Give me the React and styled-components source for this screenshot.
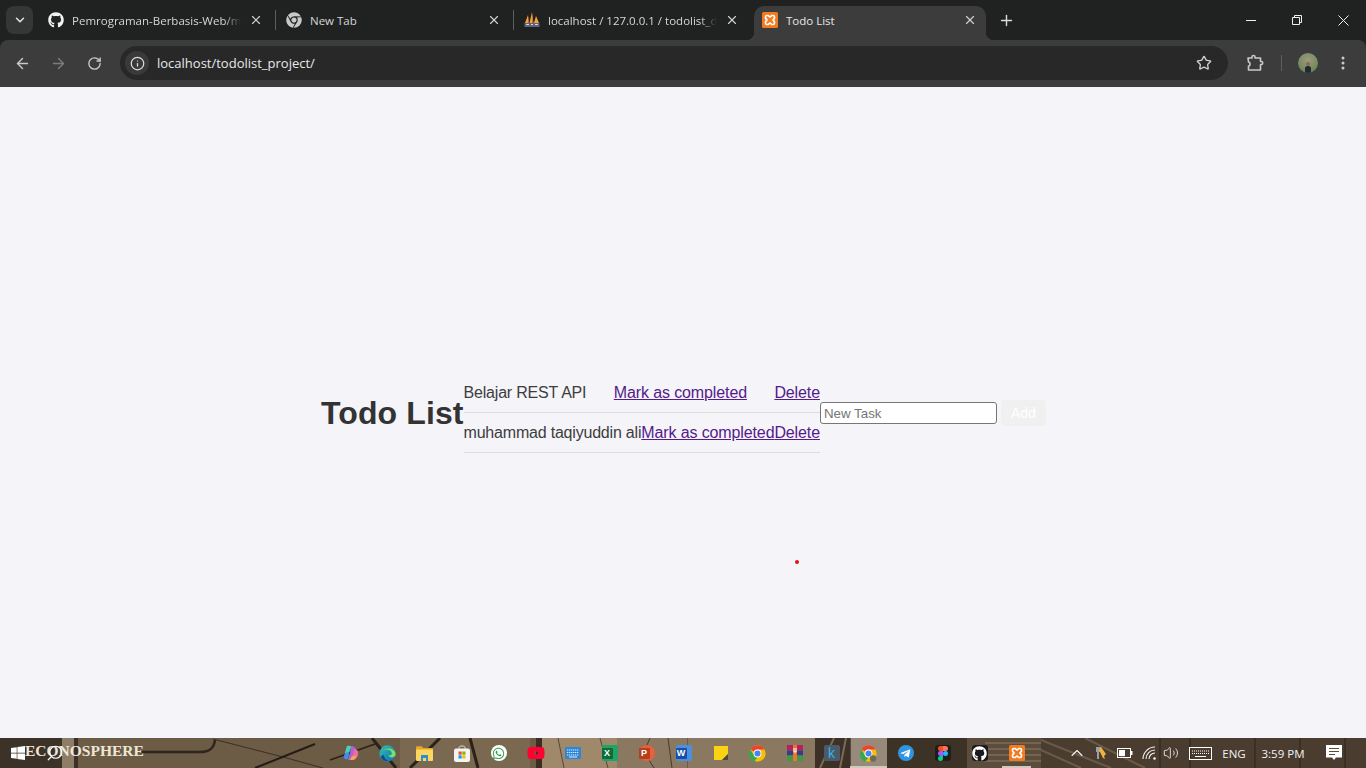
import styled, { createGlobalStyle } from 'styled-components';
import { ArrowLeft, ArrowRight, RotateCw, Info, Star, X, Plus, ChevronDown, Search, ChevronUp, Volume2 } from 'lucide-react';
import { FaGithub, FaChrome, FaWindows, FaWhatsapp, FaTelegramPlane, FaYoutube } from 'react-icons/fa';

const GlobalStyle = createGlobalStyle`
  html, body { margin: 0; padding: 0; height: 100%; overflow: hidden; }
  body { font-family: "Liberation Sans", Arial, sans-serif; background: #f4f4f9; }
`;

const Screen = styled.div`
  width: 1366px;
  height: 768px;
  display: flex;
  flex-direction: column;
  position: relative;
  overflow: hidden;
  background: #202222;
`;

/* browser chrome */
const TabStrip = styled.div`
  height: 40px;
  background: #202222;
  display: flex;
  align-items: flex-end;
  padding-left: 6px;
  font-family: "Open Sans", "Noto Sans", sans-serif;
`;

const TabSearch = styled.div`
  width: 27px;
  height: 28px;
  margin: 0 7px 6px 0;
  border-radius: 8px;
  background: #353737;
  color: #e4e4e4;
  display: flex;
  align-items: center;
  justify-content: center;
`;

const Tab = styled.div`
  width: 232px;
  height: 34px;
  margin-right: 6px;
  box-sizing: border-box;
  padding: 0 8px 6px;
  display: flex;
  align-items: center;
  gap: 8px;
  position: relative;
  border-radius: 10px 10px 0 0;
  background: ${(p) => (p.$active ? '#3c3c3c' : 'transparent')};
  color: ${(p) => (p.$active ? '#e6e6e6' : '#d6d6d6')};

  &::before {
    content: '';
    display: ${(p) => (p.$active ? 'block' : 'none')};
    position: absolute;
    left: -8px;
    bottom: 0;
    width: 8px;
    height: 8px;
    background: radial-gradient(circle at 0 0, transparent 8px, #3c3c3c 8.5px);
  }

  &::after {
    content: '';
    display: ${(p) => (p.$sep || p.$active ? 'block' : 'none')};
    position: absolute;
    right: ${(p) => (p.$active ? '-8px' : '-4px')};
    top: ${(p) => (p.$active ? 'auto' : '4px')};
    bottom: ${(p) => (p.$active ? 0 : 'auto')};
    width: ${(p) => (p.$active ? '8px' : '1px')};
    height: ${(p) => (p.$active ? '8px' : '20px')};
    background: ${(p) => (p.$active ? 'radial-gradient(circle at 100% 0, transparent 8px, #3c3c3c 8.5px)' : '#5c5e5e')};
  }
`;

const TabTitle = styled.span`
  flex: 1;
  font-size: 11.5px;
  white-space: nowrap;
  overflow: hidden;
  -webkit-mask-image: ${(p) => (p.$fade ? 'linear-gradient(90deg, #000 90%, transparent 100%)' : 'none')};
`;

const TabClose = styled.span`
  display: flex;
  color: #cfcfcf;
  margin-right: 1px;
`;

const NewTab = styled.div`
  height: 40px;
  width: 28px;
  display: flex;
  align-items: center;
  justify-content: center;
  color: #dcdcdc;
`;

const WindowControls = styled.div`
  margin-left: auto;
  height: 40px;
  display: flex;
  align-items: center;
  color: #f0f0f0;
`;

const WindowButton = styled.div`
  width: 46px;
  height: 40px;
  display: flex;
  align-items: center;
  justify-content: center;
`;

const Toolbar = styled.div`
  height: 47px;
  background: #3c3c3c;
  display: flex;
  align-items: flex-start;
  padding: 6px 0 0 4px;
  box-sizing: border-box;
  border-radius: 8px 8px 0 0;
`;

const NavButton = styled.div`
  width: 36px;
  height: 34px;
  display: flex;
  align-items: center;
  justify-content: center;
  color: ${(p) => (p.$off ? '#7c7c7c' : '#c9c9c9')};
`;

const MenuButton = styled(NavButton)`
  margin-left: 7px;
`;

const Omnibox = styled.div`
  width: 1108px;
  height: 34px;
  margin-left: 8px;
  box-sizing: border-box;
  border-radius: 17px;
  background: #282828;
  display: flex;
  align-items: center;
  padding: 0 16px 0 5px;
  color: #e8e8e8;
`;

const InfoChip = styled.div`
  width: 24px;
  height: 24px;
  border-radius: 50%;
  background: #3a3a3a;
  display: flex;
  align-items: center;
  justify-content: center;
  margin-right: 8px;
  color: #dedede;
`;

const Url = styled.span`
  flex: 1;
  font-size: 13px;
  font-family: "Open Sans", "Noto Sans", sans-serif;
`;

const ToolbarRight = styled.div`
  display: flex;
  align-items: center;
  height: 34px;
  padding-left: 9px;
  color: #c9c9c9;
`;

const ToolbarDivider = styled.div`
  width: 1px;
  height: 16px;
  background: #5f5f5f;
  margin: 0 16px 0 8px;
`;

const Avatar = styled.div`
  width: 20px;
  height: 20px;
  border-radius: 50%;
  overflow: hidden;
  background: radial-gradient(circle at 50% 35%, #9a9c80 0%, #79895f 60%, #5f6d4c 100%);
  display: flex;
  align-items: flex-end;
  justify-content: center;
`;

/* the page itself */
const Page = styled.main`
  height: 651px;
  background: #f4f4f9;
  display: flex;
  align-items: center;
  justify-content: center;
  padding-left: 1px;
  box-sizing: border-box;
`;

const Heading = styled.h1`
  margin: 0;
  padding-top: 2px;
  font-size: 32px;
  font-weight: 700;
  color: #333;
  line-height: 37px;
  letter-spacing: 0.1px;
`;

const TaskList = styled.ul`
  margin: 0;
  padding: 0;
  list-style: none;
`;

const TaskRow = styled.li`
  height: 40px;
  box-sizing: border-box;
  padding: 10px 0;
  border-bottom: 1px solid #ddd;
  display: flex;
  justify-content: space-between;
  font-size: 16px;
  line-height: 19px;
  color: #3d3d3d;
`;

const TaskName = styled.span`
  letter-spacing: -0.2px;
`;

const TaskLink = styled.a`
  color: #551a8b;
  text-decoration: underline;
  letter-spacing: -0.12px;
`;

const AddForm = styled.form`
  display: flex;
  align-items: center;
  gap: 4px;
`;

const TaskInput = styled.input`
  width: 177px;
  height: 22px;
  box-sizing: border-box;
  border: 1px solid #767676;
  border-radius: 3px;
  padding: 2px 3px 0;
  background: #fff;
  font: 13.333px "Liberation Sans", Arial, sans-serif;
  &::placeholder { color: #757575; }
`;

const AddButton = styled.button`
  width: 45px;
  height: 26px;
  border: none;
  border-radius: 4px;
  background: #f0f0f0;
  color: #fff;
  font: 14px "Liberation Sans", Arial, sans-serif;
  padding: 0;
`;

const RedDot = styled.div`
  position: absolute;
  left: 795px;
  top: 560px;
  width: 4px;
  height: 4px;
  border-radius: 50%;
  background: #e01414;
`;

/* windows taskbar */
const Taskbar = styled.footer`
  height: 30px;
  position: relative;
  display: flex;
  align-items: center;
  color: #fff;
  overflow: hidden;
  background: #65553f;
  font-family: "Open Sans", "Noto Sans", sans-serif;
`;

const Wallpaper = styled.svg`
  position: absolute;
  inset: 0;
  filter: blur(0.7px);
`;

const WallpaperTitle = styled.span`
  position: absolute;
  left: 25px;
  top: 4px;
  font: 700 15.5px "Liberation Serif", serif;
  color: #eee6d6;
  white-space: nowrap;
`;

const StartGroup = styled.div`
  position: relative;
  width: 332px;
  display: flex;
  align-items: center;
  padding-left: 10px;
  box-sizing: border-box;
  gap: 20px;
`;

const Slot = styled.div`
  position: relative;
  width: 37px;
  height: 30px;
  display: flex;
  align-items: center;
  justify-content: center;
  &::after {
    content: '';
    display: ${(p) => (p.$open ? 'block' : 'none')};
    position: absolute;
    left: ${(p) => (p.$active ? 0 : '4px')};
    right: ${(p) => (p.$active ? 0 : '4px')};
    bottom: 0;
    height: 2px;
    background: #cfc9bf;
  }
  ${(p) => p.$active && 'background: rgba(255,255,255,.12);'}
`;

const Tile = styled.div`
  width: ${(p) => p.$w || 16}px;
  height: ${(p) => p.$h || 16}px;
  border-radius: ${(p) => p.$r || 2}px;
  background: ${(p) => p.$bg};
  color: #fff;
  font: 700 10px/1 "Liberation Sans", sans-serif;
  display: flex;
  align-items: center;
  justify-content: center;
`;

const OfficeTile = styled(Tile)`
  justify-content: flex-start;
`;

const OfficeBadge = styled.span`
  width: 11px;
  height: 11px;
  border-radius: 1px;
  background: ${(p) => p.$bg};
  display: flex;
  align-items: center;
  justify-content: center;
  font-size: 9px;
`;

const KTile = styled(Tile)`
  color: #35b4e8;
  font-size: 14px;
  font-weight: 400;
`;

const Tray = styled.div`
  position: absolute;
  top: 0;
  right: 0;
  height: 30px;
  display: flex;
  align-items: center;
  color: #f2f2f2;
  font-size: 11.5px;
`;

const TrayItem = styled.div`
  width: ${(p) => p.$w}px;
  display: flex;
  justify-content: center;
  align-items: center;
  white-space: nowrap;
`;

const XamppIcon = ({ size = 16 }) => (
  <svg width={size} height={size} viewBox="0 0 16 16">
    <rect width="16" height="16" rx="1.5" fill="#f27b21" />
    <path d="M3.500 5c0-1 .7-1.500 1.500-1.500h1c1 0 1 1.500 2 1.500s1-1.500 2-1.500h1c.8 0 1.500.5 1.500 1.500v1c0 1-1.500 1-1.500 2s1.500 1 1.500 2v1c0 1-.7 1.500-1.500 1.500h-1c-1 0-1-1.500-2-1.500s-1 1.500-2 1.500H5c-.8 0-1.500-.5-1.500-1.500v-1c0-1 1.500-1 1.500-2S3.500 7 3.500 6z" fill="none" stroke="#fff" strokeWidth="1.600" />
  </svg>
);

const PmaIcon = () => (
  <svg width="16" height="16" viewBox="0 0 16 16">
    <path d="M1 11 4 3l1 8zM5.500 11 8 0l1.500 11zM10 11l2-7 3 7z" fill="#f6a13a" />
    <path d="M4 11 4.600 6 5 11zM8 11l.3-7 1 7z" fill="#c4681a" />
    <rect x="0.500" y="11" width="15" height="4" fill="#5a6280" />
    <path d="M2 12.500h3M7 12.500h2M11 12.500h3" stroke="#d7d9e2" strokeWidth="1" />
  </svg>
);

const ChromeColor = ({ badge }) => (
  <svg width="17" height="17" viewBox="0 0 48 48">
    <circle cx="24" cy="24" r="23" fill="#fbbc04" />
    <path d="M24 1a23 23 0 0 1 19.900 11.500H24a11.500 11.500 0 0 0-10 5.800L4.100 12.500A23 23 0 0 1 24 1z" fill="#ea4335" />
    <path d="M4.100 12.500 14 29.800A11.500 11.500 0 0 0 24 35.500L14 47a23 23 0 0 1-9.900-34.500z" fill="#34a853" />
    <circle cx="24" cy="24" r="11" fill="#fff" />
    <circle cx="24" cy="24" r="8.500" fill="#4285f4" />
    {badge && <circle cx="37" cy="38" r="9" fill="#6b6b55" />}
  </svg>
);

const EdgeIcon = () => (
  <svg width="17" height="17" viewBox="0 0 48 48">
    <defs>
      <linearGradient id="edgeFill" x1="0" y1="0" x2="1" y2="1">
        <stop offset="0" stopColor="#35c1a5" />
        <stop offset="1" stopColor="#0f6bbd" />
      </linearGradient>
    </defs>
    <circle cx="24" cy="24" r="23" fill="url(#edgeFill)" />
    <path d="M47 26c0-9-9-16-20-16C17 10 9 16 9 24c0-7 7-11 14-11 9 0 13 6 13 11 0 3-2 5-5 5-2 0-4 0-4-2 0 6 6 9 11 8 5-1 9-4 9-9z" fill="#7fe05f" />
    <path d="M14 28c0 8 6 14 13 16-8 3-19-1-22-11 3-3 6-4 9-5z" fill="#0c4d8f" />
  </svg>
);

const CopilotIcon = () => (
  <svg width="18" height="18" viewBox="0 0 18 18">
    <path d="M5 2h4l-2 8-1 5c-3 1-5-1-4-3z" fill="#3f8fe8" />
    <path d="M9 2c3 0 5 2 5 4l-2 6-3 4H6l2-6z" fill="#a765d8" />
    <path d="M12 5c3 0 5 2 4 6-1 3-3 5-5 5H8l3-5z" fill="#f06aa0" />
    <path d="M5 2c2-.6 4 0 4 1L7 8 3 9z" fill="#4dd0b0" />
    <path d="M10 12c2 0 4 0 5-1-1 3-3 5-5 5H8z" fill="#f7a54b" />
  </svg>
);

const FolderIcon = () => (
  <svg width="17" height="15" viewBox="0 0 17 15">
    <path d="M0 1.500C0 .7.5.3 1.200.3h4.500L7.300 2H16c.6 0 1 .4 1 1v2H0z" fill="#e5a823" />
    <rect y="3.500" width="17" height="11.500" rx="1" fill="#fbd660" />
    <path d="M5 15V9h7v6h-2v-3H7v3z" fill="#2b8fd8" />
  </svg>
);

const StoreIcon = () => (
  <svg width="16" height="17" viewBox="0 0 16 17">
    <path d="M5 4V2.500C5 1.500 6 1 8 1s3 .5 3 1.500V4" fill="none" stroke="#ddd" strokeWidth="1" />
    <rect y="3.500" width="16" height="13.500" rx="2" fill="#f4f4f4" />
    <rect x="4.500" y="6.500" width="3.200" height="3.200" fill="#f25022" />
    <rect x="8.300" y="6.500" width="3.200" height="3.200" fill="#7fba00" />
    <rect x="4.500" y="10.300" width="3.200" height="3.200" fill="#00a4ef" />
    <rect x="8.300" y="10.300" width="3.200" height="3.200" fill="#ffb900" />
  </svg>
);

const KeyboardTile = () => (
  <svg width="16" height="12" viewBox="0 0 16 12">
    <rect width="16" height="12" rx="1" fill="#2f86d6" />
    <path d="M2 3h12M2 5.500h12M2 8h12" stroke="#d9ecfb" strokeWidth="1.100" strokeDasharray="1.300 .7" />
    <path d="M4 10h8" stroke="#d9ecfb" strokeWidth="1" />
  </svg>
);

const StickyIcon = () => (
  <svg width="14" height="14" viewBox="0 0 14 14">
    <path d="M0 0h14v8l-6 6H0z" fill="#fcd116" />
    <path d="M14 8v6H8z" fill="#4d4a3a" />
  </svg>
);

const WinrarIcon = () => (
  <svg width="16" height="16" viewBox="0 0 16 16">
    <rect y="0" width="16" height="5.500" fill="#b3245e" />
    <rect y="5.500" width="16" height="5" fill="#3d3a8c" />
    <rect y="10.500" width="16" height="5.500" fill="#3e9a47" />
    <rect x="6" y="0" width="4" height="16" fill="#e8772e" />
    <path d="M7 3v4h2V3" fill="none" stroke="#fff" strokeWidth="1" />
  </svg>
);

const FigmaIcon = () => (
  <svg width="10" height="15" viewBox="0 0 10 15">
    <path d="M0 2.500A2.500 2.500 0 0 1 2.500 0H5v5H2.500A2.500 2.500 0 0 1 0 2.500z" fill="#f24e1e" />
    <path d="M5 0h2.500a2.500 2.500 0 0 1 0 5H5z" fill="#ff7262" />
    <path d="M0 7.500A2.500 2.500 0 0 1 2.500 5H5v5H2.500A2.500 2.500 0 0 1 0 7.500z" fill="#a259ff" />
    <circle cx="7.500" cy="7.500" r="2.500" fill="#1abcfe" />
    <path d="M0 12.500A2.500 2.500 0 0 1 2.500 10H5v2.500a2.500 2.500 0 0 1-5 0z" fill="#0acf83" />
  </svg>
);

const WifiIcon = () => (
  <svg width="15" height="15" viewBox="0 0 15 15" fill="none" stroke="#f2f2f2" strokeWidth="1.100">
    <path d="M1 13A12 12 0 0 1 13 1M4 13a9 9 0 0 1 9-9M7 13a6 6 0 0 1 6-6" />
    <circle cx="12.500" cy="12.500" r="1.300" fill="#f2f2f2" stroke="none" />
  </svg>
);

const tabs = [
  { title: 'Pemrograman-Berbasis-Web/m', icon: <FaGithub size={16} color="#f2f2f2" />, sep: true, fade: true },
  { title: 'New Tab', icon: <FaChrome size={16} color="#c9c9c9" />, sep: true },
  { title: 'localhost / 127.0.0.1 / todolist_d', icon: <PmaIcon />, fade: true },
  { title: 'Todo List', icon: <XamppIcon />, active: true },
];

const tasks = ['Belajar REST API', 'muhammad taqiyuddin ali'];

export default function App() {
  return (
    <Screen>
      <GlobalStyle />
      <TabStrip>
        <TabSearch><ChevronDown size={14} strokeWidth={2.5} /></TabSearch>
        {tabs.map((t) => (
          <Tab key={t.title} $active={t.active} $sep={t.sep}>
            {t.icon}
            <TabTitle $fade={t.fade}>{t.title}</TabTitle>
            <TabClose><X size={14} strokeWidth={2} /></TabClose>
          </Tab>
        ))}
        <NewTab><Plus size={17} strokeWidth={2} /></NewTab>
        <WindowControls>
          <WindowButton>
            <svg width="10" height="10" viewBox="0 0 10 10"><path d="M0 5.500h10" stroke="currentColor" /></svg>
          </WindowButton>
          <WindowButton>
            <svg width="10" height="10" viewBox="0 0 10 10"><path d="M.5 2.500h7v7h-7zM2.500 2.500v-2h7v7h-2" fill="none" stroke="currentColor" /></svg>
          </WindowButton>
          <WindowButton>
            <svg width="11" height="11" viewBox="0 0 11 11"><path d="M.5.500l10 10M10.500.500l-10 10" stroke="currentColor" /></svg>
          </WindowButton>
        </WindowControls>
      </TabStrip>

      <Toolbar>
        <NavButton><ArrowLeft size={17} /></NavButton>
        <NavButton $off><ArrowRight size={17} /></NavButton>
        <NavButton><RotateCw size={15} strokeWidth={2.2} /></NavButton>
        <Omnibox>
          <InfoChip><Info size={15} /></InfoChip>
          <Url>localhost/todolist_project/</Url>
          <Star size={16} strokeWidth={2} color="#d0d0d0" />
        </Omnibox>
        <ToolbarRight>
          <NavButton>
            <svg width="18" height="18" viewBox="0 0 18 18" fill="none" stroke="currentColor" strokeWidth="1.600">
              <path d="M2 4h4V3c0-1 .8-1.500 1.500-1.500S9 2 9 3v1h5.500v3.500h1c.8 0 1.200.7 1.200 1.500s-.4 1.500-1.200 1.500h-1v5.500H2.500v-4c1 0 1.500-.7 1.500-1.500S3.500 8 2.500 8z" strokeLinejoin="round" />
            </svg>
          </NavButton>
          <ToolbarDivider />
          <Avatar>
            <svg width="10" height="12" viewBox="0 0 10 12">
              <circle cx="5" cy="3" r="2" fill="#8a6a52" />
              <path d="M2 12V7c0-1 1-2 3-2s3 1 3 2v5z" fill="#1f2a33" />
            </svg>
          </Avatar>
          <MenuButton>
            <svg width="4" height="14" viewBox="0 0 4 14" fill="currentColor">
              <circle cx="2" cy="2" r="1.500" /><circle cx="2" cy="7" r="1.500" /><circle cx="2" cy="12" r="1.500" />
            </svg>
          </MenuButton>
        </ToolbarRight>
      </Toolbar>

      <Page>
        <Heading>Todo List</Heading>
        <TaskList>
          {tasks.map((task) => (
            <TaskRow key={task}>
              <TaskName>{task}</TaskName>
              <TaskLink href="#complete">Mark as completed</TaskLink>
              <TaskLink href="#delete">Delete</TaskLink>
            </TaskRow>
          ))}
        </TaskList>
        <AddForm>
          <TaskInput type="text" placeholder="New Task" />
          <AddButton type="button">Add</AddButton>
        </AddForm>
      </Page>
      <RedDot />

      <Taskbar>
        <Wallpaper width="1366" height="30" viewBox="0 0 1366 30">
          <rect width="1366" height="30" fill="#6c5b45" />
          <rect width="62" height="30" fill="#3d3228" />
          <rect x="62" width="12" height="30" fill="#8d7d66" />
          <rect x="74" width="4" height="30" fill="#3c3128" />
          <path d="M140 14h60c10 0 14-4 15-12" fill="none" stroke="#2e261e" strokeWidth="2.500" />
          <path d="M213 1l70 18 40 11" stroke="#3a3026" strokeWidth="1" fill="none" />
          <path d="M255 30l60-24" stroke="#241c15" strokeWidth="2" />
          <path d="M330 22l45-16" stroke="#2a2119" strokeWidth="1.500" />
          <rect x="400" width="130" height="30" fill="#7a6851" />
          <path d="M372 0l24 30M440 0l-30 30M470 0l8 30" stroke="#2a2119" strokeWidth="3" fill="none" />
          <rect x="536" width="6" height="30" fill="#3a2e24" />
          <rect x="542" width="75" height="30" fill="#a0896b" />
          <path d="M558 0l6 30M600 0l8 30" stroke="#57473a" strokeWidth="1" />
          <rect x="617" width="70" height="30" fill="#8b7860" />
          <path d="M650 0l-6 14 10 16M668 0l4 30" stroke="#4a3b2e" strokeWidth="1" fill="none" />
          <rect x="688" width="128" height="30" fill="#8a7860" />
          <rect x="815" width="36" height="30" fill="#3d3127" />
          <path d="M820 30l14-30M840 30l6-30" stroke="#7a6a58" strokeWidth="2" />
          <rect x="851" width="36" height="30" fill="#8a7a68" />
          <rect x="887" width="80" height="30" fill="#3d3226" />
          <rect x="967" width="74" height="30" fill="#5b4c3c" />
          <path d="M985 5h56M985 11h56M985 17h56M985 23h56" stroke="#7d6c58" strokeWidth="1.500" />
          <rect x="1041" width="325" height="30" fill="#4a3d30" />
          <path d="M1041 2l70 28M1041 12l40 18M1085 0l60 30" stroke="#6b5a47" strokeWidth="2" />
          <path d="M1160 0v30M1190 0v30M1255 0v30M1300 0v30M1345 0v30" stroke="#3a2f24" strokeWidth="2" />
        </Wallpaper>
        <WallpaperTitle>ECONOSPHERE</WallpaperTitle>
        <StartGroup>
          <FaWindows size={16} color="#fff" />
          <Search size={18} color="#fff" strokeWidth={1.6} style={{ transform: 'scaleX(-1)' }} />
        </StartGroup>
        <Slot><CopilotIcon /></Slot>
        <Slot><EdgeIcon /></Slot>
        <Slot><FolderIcon /></Slot>
        <Slot><StoreIcon /></Slot>
        <Slot>
          <Tile $bg="#fff" $r={8}><FaWhatsapp size={13} color="#25a244" /></Tile>
        </Slot>
        <Slot><FaYoutube size={18} color="#ff0033" /></Slot>
        <Slot><KeyboardTile /></Slot>
        <Slot><OfficeTile $bg="#21a366"><OfficeBadge $bg="#0e6b3a">X</OfficeBadge></OfficeTile></Slot>
        <Slot><OfficeTile $bg="#e8603c" $r={8}><OfficeBadge $bg="#b7401c">P</OfficeBadge></OfficeTile></Slot>
        <Slot><OfficeTile $bg="#4a8fe0"><OfficeBadge $bg="#174ea6">W</OfficeBadge></OfficeTile></Slot>
        <Slot><StickyIcon /></Slot>
        <Slot><ChromeColor /></Slot>
        <Slot><WinrarIcon /></Slot>
        <Slot><KTile $bg="#4a5a68">k</KTile></Slot>
        <Slot $open $active><ChromeColor badge /></Slot>
        <Slot><Tile $bg="#2f95e0" $r={8}><FaTelegramPlane size={11} color="#fff" /></Tile></Slot>
        <Slot><Tile $bg="#1e1e1e" $r={3}><FigmaIcon /></Tile></Slot>
        <Slot><Tile $bg="#1b1b1f" $r={3}><FaGithub size={15} color="#fff" /></Tile></Slot>
        <Slot $open><XamppIcon /></Slot>
        <Tray>
          <TrayItem $w={24}><ChevronUp size={20} strokeWidth={1.3} /></TrayItem>
          <TrayItem $w={24}>
            <svg width="14" height="16" viewBox="0 0 14 16">
              <path d="M2 2h5v5H5v7H3V7H2z" fill="#9aa0a6" />
              <path d="M7 2l5 7-2 2 1 3-2-1-4-8z" fill="#f0b23e" />
            </svg>
          </TrayItem>
          <TrayItem $w={24}>
            <svg width="16" height="10" viewBox="0 0 16 10">
              <rect x=".5" y=".5" width="13" height="9" fill="none" stroke="#fff" />
              <rect x="2" y="2" width="6" height="6" fill="#fff" />
              <rect x="14" y="3" width="1.500" height="4" fill="#fff" />
            </svg>
          </TrayItem>
          <TrayItem $w={24}><WifiIcon /></TrayItem>
          <TrayItem $w={20}><Volume2 size={16} strokeWidth={1.3} /></TrayItem>
          <TrayItem $w={38}>
            <svg width="23" height="13" viewBox="0 0 23 13" fill="none" stroke="#fff">
              <rect x=".5" y=".5" width="22" height="12" />
              <path d="M3 4h17M3 6.500h17" strokeDasharray="1 1" />
              <path d="M6 9.500h11" />
            </svg>
          </TrayItem>
          <TrayItem $w={30}>ENG</TrayItem>
          <TrayItem $w={68}>3:59 PM</TrayItem>
          <TrayItem $w={33}>
            <svg width="16" height="16" viewBox="0 0 16 16">
              <path d="M0 0h16v12.500H10L8 15l-2-2.500H0z" fill="#fff" />
              <path d="M3 3.500h10M3 6.500h10M3 9.500h6" stroke="#5b4c3c" />
            </svg>
          </TrayItem>
          <TrayItem $w={16} />
        </Tray>
      </Taskbar>
    </Screen>
  );
}
